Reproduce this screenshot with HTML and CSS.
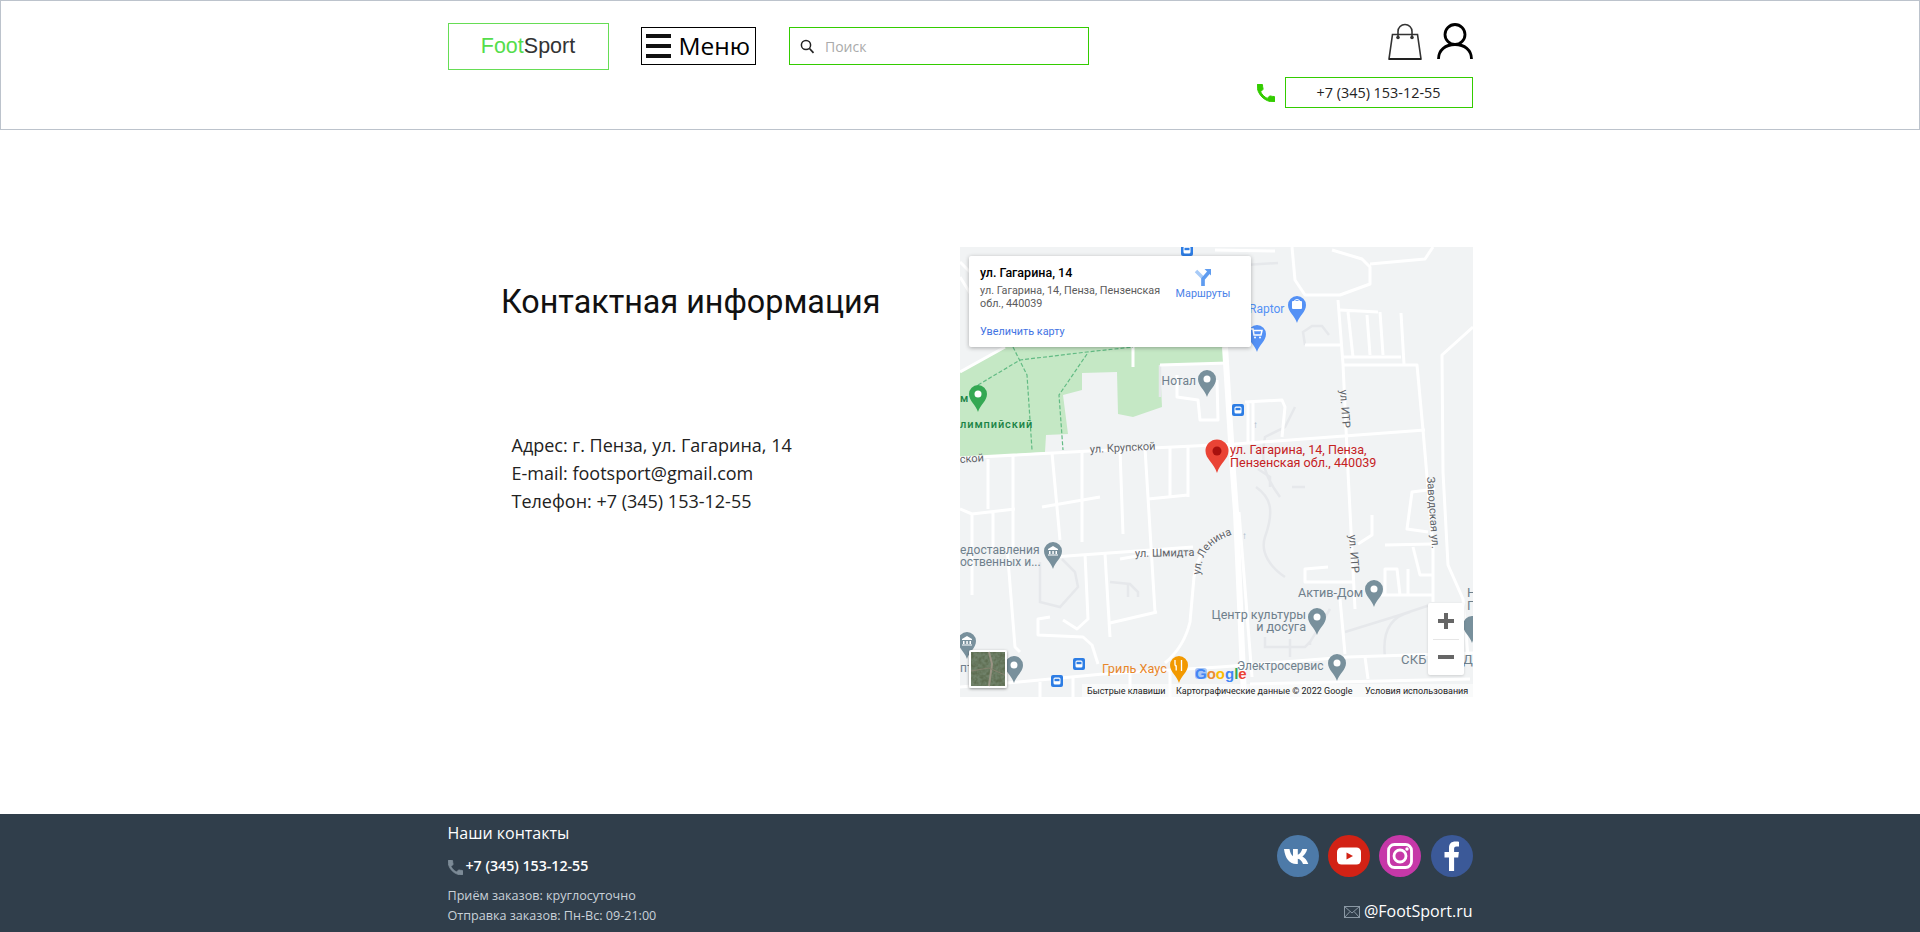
FILE: index.html
```html
<!DOCTYPE html>
<html>
<head>
  <meta charset="UTF-8">
  <title>FootSport - Контактная информация</title>
  <link rel="stylesheet" href="styles.css">
</head>
<body>
  <header id="header">
    <div class="wrap head-row">
      <div class="logo"><span class="logo-foot">Foot</span>Sport</div>
      <button class="menu-btn">
        <span class="burger"><i></i><i></i><i></i></span>
        <span>Меню</span>
      </button>
      <div class="search">
        <svg width="15" height="15" viewBox="0 0 15 15"><circle cx="6" cy="6" r="4.6" fill="none" stroke="#222" stroke-width="1.5"/><path d="M9.5 9.5l4 4.3" stroke="#222" stroke-width="1.7"/></svg>
        <span class="search-text">Поиск</span>
      </div>
      <div class="head-right">
        <div class="head-icons">
          <svg width="34" height="37" viewBox="0 0 34 37"><path d="M4.500 11.500h25l3.500 24.500H1z" fill="none" stroke="#333" stroke-width="1.600"/><path d="M1 36h32" stroke="#222" stroke-width="2"/><path d="M10 14V8.500a7 7 0 0 1 14 0V14" fill="none" stroke="#333" stroke-width="1.600"/><circle cx="10" cy="14.500" r="1.800" fill="#333"/><circle cx="24" cy="14.500" r="1.800" fill="#333"/></svg>
          <svg width="36" height="36" viewBox="0 0 36 36"><circle cx="18" cy="11.500" r="10" fill="none" stroke="#000" stroke-width="2.800"/><path d="M1.500 36c0-9 7-14.500 16.500-14.500S34.500 27 34.500 36" fill="none" stroke="#000" stroke-width="2.800"/></svg>
        </div>
        <div class="head-phone">
          <svg class="green-phone" width="18" height="18" viewBox="3 3 18 18"><path d="M6.620 10.790c1.440 2.830 3.760 5.140 6.590 6.590l2.200-2.200c.27-.27.67-.36 1.020-.24 1.120.37 2.330.57 3.570.57.55 0 1 .45 1 1V20c0 .55-.45 1-1 1-9.390 0-17-7.610-17-17 0-.55.45-1 1-1h3.500c.55 0 1 .45 1 1 0 1.250.2 2.450.57 3.570.11.35.03.74-.25 1.020l-2.200 2.200z"/></svg>
          <div class="phone-box">+7 (345) 153-12-55</div>
        </div>
      </div>
    </div>
  </header>

  <main id="main">
    <div class="wrap content-row">
      <div class="contact-info">
        <h1>Контактная информация</h1>
        <div class="contact-lines">
          <div>Адрес: г. Пенза, ул. Гагарина, 14</div>
          <div>E-mail: footsport@gmail.com</div>
          <div>Телефон: +7 (345) 153-12-55</div>
        </div>
      </div>

      <div class="map">
        <svg class="map-svg" width="513" height="450" viewBox="0 0 513 450">
          <defs>
            <path id="pin" d="M0 18C-2 11-9 7-9 0A9 9 0 1 1 9 0C9 7 2 11 0 18Z"/>
            <g id="bus">
              <rect x="-6" y="-6" width="12" height="12" rx="2" fill="#2d7de4"/>
              <rect x="-3.500" y="-3.500" width="7" height="7" rx="1.500" fill="#fff"/>
              <rect x="-2.500" y="-2.200" width="5" height="2.400" fill="#2d7de4"/>
            </g>
            <path id="lenin-curve" d="M240 328C242 306 250 295 274 287"/>
            <filter id="sat-noise" x="0" y="0" width="100%" height="100%">
              <feTurbulence type="fractalNoise" baseFrequency=".28" numOctaves="2" seed="4"/>
              <feColorMatrix values="0 0 0 0 .16  0 0 0 0 .22  0 0 0 0 .14  2.400 0 0 0 -.6"/>
            </filter>
            <filter id="thumb-shadow" x="-20%" y="-20%" width="140%" height="140%">
              <feDropShadow dx="0" dy="1" stdDeviation="1.500" flood-opacity=".4"/>
            </filter>
          </defs>
          <rect width="513" height="450" fill="#f1f3f4"/>

          <path class="park" d="M0 125L45 100H263V116L200 118L202 160L173 170L158 167L157 125L122 126V143L103 148L108 187L86 188L85 205L0 211Z"/>

          <g class="road-faint">
            <path d="M345 98L343 85L352 79L362 79L369 88"/>
            <path d="M285 18L318 16"/>
            <path d="M200 118V150"/>
            <path d="M80 315V355L100 360L118 340L115 325L102 312"/>
            <path d="M150 335L170 337L178 345L178 350M168 337V350"/>
            <path d="M320 250C305 230 300 215 305 190L325 180L335 160M310 240V230L298 222M332 240L345 240"/>
            <path d="M296 240C310 250 315 262 305 290C300 305 310 320 325 330"/>
            <path d="M350 398V395L370 362M385 385L440 368L470 358M425 410C422 385 430 370 450 365M305 390V400H345L350 395M330 392V410"/>
          </g>

          <g class="road">
            <path d="M0 211L130 204L275 197L465 183"/>
            <path d="M28 212V262M53 207V300M92 206L100 293M122 205L122 295M160 203L163 287M185 201L195 365M210 200V250M228 199V250"/>
            <path d="M0 262L12 267L55 262M12 267V348M33 265V300M47 300L55 400L60 405"/>
            <path d="M82 260L140 250M188 252L228 248"/>
            <path d="M93 310L233 300M160 312L200 305"/>
            <path d="M268 287C250 292 238 305 234 330L230 375C226 392 218 405 205 416"/>
            <path d="M125 307L128 372L117 382L103 373"/>
            <path d="M145 307L150 390"/>
            <path d="M150 376L197 365"/>
            <path d="M90 370L78 372V388L123 390L132 398L138 417"/>
            <path d="M0 440L47 436L143 427L260 420L388 410L513 406"/>
            <path d="M80 435V450M113 431V450M170 425V450M210 422V450M405 410L408 432"/>
            <path d="M290 437L510 432"/>
            <path d="M378 53L383 117L388 225L395 362"/>
            <path d="M380 352L385 407"/>
            <path d="M332 0L335 33L345 48H380L410 37V20L402 12L372 3M410 17L465 12L473 0"/>
            <path d="M380 63L418 65M388 65L393 110M407 68L410 108M420 65L423 108M441 66L444 117"/>
            <path d="M383 110H441M383 118H457L463 183L473 300V355"/>
            <path d="M475 242L452 245L447 282L468 285M425 298L472 297M453 300L460 328H473"/>
            <path d="M418 348H473M425 348V322H437L440 348M448 322V348"/>
            <path d="M513 80L482 108L483 225L488 318L503 352L508 410"/>
            <path d="M368 320L345 322V335L393 335"/>
            <path d="M412 268V288L398 297"/>
            <path d="M345 98H380"/>
            <path d="M285 155L322 153L325 160L322 190M288 155V195M293 155V195"/>
            <path d="M255 3L315 4M200 118L268 116"/>
            <path d="M217 128V150L238 153L240 173L258 173L257 133"/>
            <path d="M173 100V120M0 15L30 45M0 30L22 65M0 125L45 100"/>
          </g>
          <path class="road-main" d="M265 100L273 225L276 265L284 450"/>
          <path class="road" d="M279 265L292 430"/>

          <g class="trail">
            <path d="M18 138L60 113L127 105L173 100"/>
            <path d="M53 100L67 128L72 203"/>
            <path d="M127 107L99 148L103 203"/>
          </g>

          <!-- pins -->
          <g fill="#78909c">
            <use href="#pin" x="247" y="132"/>
            <use href="#pin" x="93" y="304"/>
            <use href="#pin" x="7" y="394"/>
            <use href="#pin" x="54" y="418"/>
            <use href="#pin" x="414" y="342"/>
            <use href="#pin" x="357" y="370"/>
            <use href="#pin" x="377" y="416"/>
            <use href="#pin" x="512" y="378"/>
          </g>
          <g fill="#fff">
            <circle cx="247" cy="132" r="3.500"/>
            <circle cx="54" cy="418" r="3.500"/>
            <circle cx="414" cy="342" r="3.500"/>
            <circle cx="357" cy="370" r="3.500"/>
            <circle cx="377" cy="416" r="3.500"/>
            <path d="M88 302l5-3 5 3v1H88zM89 304h1.500v3H89zM92.300 304h1.500v3h-1.500zM95.500 304H97v3h-1.500zM88 307.500h10v1H88z"/>
            <path d="M2 392l5-3 5 3v1H2zM3 394h1.500v3H3zM6.300 394h1.500v3H6.300zM9.500 394H11v3H9.500zM2 397.500h10v1H2z"/>
          </g>
          <use href="#pin" x="337" y="58" fill="#5491f5"/>
          <rect x="332" y="54" width="10" height="8" rx="1" fill="#fff"/>
          <path d="M334 55.500a3 3 0 0 1 6 0" fill="none" stroke="#fff"/>
          <use href="#pin" x="297" y="87" fill="#5491f5"/>
          <path d="M291 82h2l1 6h7l1-4.500h-8.500" fill="none" stroke="#fff" stroke-width="1.500"/>
          <circle cx="295" cy="90.500" r="1" fill="#fff"/><circle cx="300" cy="90.500" r="1" fill="#fff"/>
          <use href="#pin" x="18" y="147" fill="#34a853"/>
          <circle cx="18" cy="147" r="3.500" fill="#fff"/>
          <use href="#pin" x="219" y="418" fill="#f29900"/>
          <path d="M215 413v4.500a1.500 1.500 0 0 0 1.200 1.500v4.500M221.500 413v11" fill="none" stroke="#fff" stroke-width="1.300"/>
          <use href="#bus" x="227" y="3"/>
          <use href="#bus" x="278" y="163"/>
          <use href="#bus" x="119" y="417"/>
          <use href="#bus" x="97" y="434"/>
          <text class="arrow-mark" x="293" y="181">↑</text>
          <text class="arrow-mark" x="282" y="292">↑</text>

          <!-- labels -->
          <g class="poi">
            <text x="236" y="138" text-anchor="end">Нотал</text>
            <text x="0" y="307">едоставления</text>
            <text x="0" y="319">оственных и...</text>
            <text x="0" y="425">пт</text>
            <text class="poi-md" x="338" y="350">Актив-Дом</text>
            <text class="poi-md" x="346" y="372" text-anchor="end">Центр культуры</text>
            <text class="poi-md" x="346" y="384" text-anchor="end">и досуга</text>
            <text x="277" y="423">Электросервис</text>
            <text class="poi-lg" x="441" y="417">СКБ</text>
            <text class="poi-lg" x="503" y="417">Ди</text>
            <text class="poi-lg" x="507" y="350">Н</text>
            <text class="poi-lg" x="507" y="363">П</text>
          </g>
          <text class="poi-blue" x="289" y="66">Raptor</text>
          <text class="poi-green" x="0" y="181">лимпийский</text>
          <text class="poi-green" x="0" y="155">м</text>
          <text class="poi-orange" x="142" y="426">Гриль Хаус</text>
          <g class="street">
            <text transform="translate(130 206) rotate(-3)">ул. Крупской</text>
            <text transform="translate(0 216) rotate(-4)">ской</text>
            <text transform="translate(175 310) rotate(-1)">ул. Шмидта</text>
            <text transform="translate(380 143) rotate(86)">ул. ИТР</text>
            <text transform="translate(389 288) rotate(86)">ул. ИТР</text>
            <text transform="translate(467 230) rotate(86)">Заводская ул.</text>
            <text><textPath href="#lenin-curve">ул. Ленина</textPath></text>
          </g>

          <path fill="#ea4335" d="M257 226C254 216 245.500 212 245.500 204A11.500 11.500 0 1 1 268.500 204C268.500 212 260 216 257 226Z"/>
          <circle cx="257" cy="204" r="4.500" fill="#a8100e"/>
          <text class="poi-red" x="270" y="207">ул. Гагарина, 14, Пенза,</text>
          <text class="poi-red" x="270" y="220">Пензенская обл., 440039</text>

          <!-- google logo + bottom strip -->
          <rect x="235" y="421" width="12" height="11" rx="3" fill="#a9c6f5"/>
          <text class="google" x="235" y="432"><tspan fill="#4285f4">G</tspan><tspan fill="#ea8b35">o</tspan><tspan fill="#fbbc05">o</tspan><tspan fill="#4285f4">g</tspan><tspan fill="#34a853">l</tspan><tspan fill="#ea4335">e</tspan></text>
          <rect x="122" y="437" width="391" height="13" fill="#fff" fill-opacity=".55"/>
          <g class="map-foot">
            <text x="127" y="447">Быстрые клавиши</text>
            <text x="216" y="447">Картографические данные © 2022 Google</text>
            <text x="405" y="447">Условия использования</text>
          </g>

          <!-- satellite thumb -->
          <rect x="9" y="403" width="38" height="38" rx="2" fill="#fff" filter="url(#thumb-shadow)"/>
          <rect x="11" y="405" width="34" height="34" fill="#5d6c50"/>
          <rect x="11" y="405" width="34" height="34" filter="url(#sat-noise)"/>
          <path d="M29 405l3 12-3 22" stroke="#9a9384" stroke-width="2" fill="none"/>
          <path d="M11 424l18-3 16 7" stroke="#85826f" stroke-width="1" fill="none"/>
        </svg>

        <div class="map-card">
          <div class="card-text">
            <div class="card-title">ул. Гагарина, 14</div>
            <div class="card-addr">ул. Гагарина, 14, Пенза, Пензенская<br>обл., 440039</div>
            <div class="card-link">Увеличить карту</div>
          </div>
          <div class="card-route">
            <svg width="18" height="18" viewBox="0 0 18 18"><path d="M2 3l7 7v8" fill="none" stroke="#a8cbf7" stroke-width="3.500"/><path d="M9 18v-7l6-7" fill="none" stroke="#5f9cf0" stroke-width="3.500"/><path d="M10.500 1H17v6.500z" fill="#5f9cf0"/></svg>
            <span>Маршруты</span>
          </div>
        </div>

        <div class="zoom-ctrl">
          <div class="zoom-btn"><span class="plus"></span></div>
          <div class="zoom-btn zoom-minus"><span class="minus"></span></div>
        </div>
      </div>
    </div>
  </main>

  <footer id="footer">
    <div class="wrap foot-row">
      <div class="foot-left">
        <div class="foot-title">Наши контакты</div>
        <div class="foot-phone">
          <svg width="15" height="15" viewBox="3 3 18 18"><path fill="#7d8b97" stroke="#7d8b97" d="M6.620 10.790c1.440 2.830 3.760 5.140 6.590 6.590l2.200-2.200c.27-.27.67-.36 1.020-.24 1.120.37 2.330.57 3.570.57.55 0 1 .45 1 1V20c0 .55-.45 1-1 1-9.390 0-17-7.610-17-17 0-.55.45-1 1-1h3.500c.55 0 1 .45 1 1 0 1.250.2 2.450.57 3.570.11.35.03.74-.25 1.020l-2.200 2.200z"/></svg>
          <span>+7 (345) 153-12-55</span>
        </div>
        <div class="foot-hours">Приём заказов: круглосуточно</div>
        <div class="foot-hours">Отправка заказов: Пн-Вс: 09-21:00</div>
      </div>
      <div class="foot-right">
        <div class="socials">
          <svg width="42" height="42" viewBox="0 0 42 42"><circle cx="21" cy="21" r="21" fill="#4d7aa8"/><path fill="#fff" d="M7 14h5.500c.6 3.600 1.800 6 3.500 7.200V14h4.800v5.800c1.900-.8 3.500-3 4.500-5.800h4.900c-.8 3.400-2.800 6-4.800 7.400 2.400 1.200 4.700 3.600 5.900 7.600h-5.300c-1-2.900-2.900-4.700-5.200-5.200V29h-1.600C12.700 29 8 23.500 7 14z"/></svg>
          <svg width="42" height="42" viewBox="0 0 42 42"><circle cx="21" cy="21" r="21" fill="#d22215"/><rect x="9" y="12.500" width="24" height="17" rx="4.500" fill="#fff"/><path d="M18.500 17.500l6.500 3.500-6.500 3.500z" fill="#d22215"/></svg>
          <svg width="42" height="42" viewBox="0 0 42 42"><circle cx="21" cy="21" r="21" fill="#c638a8"/><rect x="9.500" y="9.500" width="23" height="23" rx="6" fill="none" stroke="#fff" stroke-width="2.800"/><circle cx="21" cy="21" r="6" fill="none" stroke="#fff" stroke-width="2.800"/><circle cx="28" cy="14" r="1.700" fill="#fff"/></svg>
          <svg width="42" height="42" viewBox="0 0 42 42"><circle cx="21" cy="21" r="21" fill="#3b5998"/><path fill="#fff" d="M18 36V22.500h-4.500V17H18v-4c0-4.500 2.600-6.500 6.400-6.500 1.800 0 3.100.1 3.600.2v4.800h-2.500c-2 0-2.400 1-2.400 2.400V17h4.800l-.7 5.500h-4.100V36z"/></svg>
        </div>
        <div class="foot-mail">
          <svg width="16" height="12" viewBox="0 0 16 12"><rect x=".5" y=".5" width="15" height="11" fill="none" stroke="#8a98a4"/><path d="M.5.500L8 7l7.500-6.500M.5 11.500L6 5.500M15.500 11.500L10 5.500" fill="none" stroke="#8a98a4"/></svg>
          <span>@FootSport.ru</span>
        </div>
      </div>
    </div>
  </footer>
</body>
</html>
```

FILE: styles.css
```css
html, body {
  margin: 0;
  padding: 0;
  height: 100%;
  overflow: hidden;
}

body {
  display: flex;
  flex-direction: column;
  height: 100vh;
  background: #fff;
  font-family: "Open Sans", sans-serif;
  color: #222;
}

.wrap {
  width: 1025px;
  margin: 0 auto;
}

/* header */
#header {
  height: 130px;
  box-sizing: border-box;
  border: 1px solid #bcc3cc;
  flex-shrink: 0;
}

.head-row {
  display: flex;
  align-items: flex-start;
  padding-top: 22px;
}

.logo {
  width: 161px;
  height: 47px;
  box-sizing: border-box;
  border: 1px solid #66dd55;
  font-family: "Liberation Sans", sans-serif;
  font-size: 21.500px;
  line-height: 45px;
  text-align: center;
  color: #333;
}

.logo-foot {
  color: #55dd4c;
}

.menu-btn {
  display: flex;
  align-items: center;
  width: 115px;
  height: 38px;
  box-sizing: border-box;
  margin: 4px 0 0 32px;
  padding: 0 0 0 4px;
  border: 1px solid #000;
  background: #fff;
  font-family: "Open Sans", sans-serif;
  font-size: 24.500px;
  line-height: 34px;
  color: #000;
}

.burger {
  display: flex;
  flex-direction: column;
  gap: 6.500px;
  width: 25px;
  margin-right: 8px;
}

.burger i {
  display: block;
  height: 3.500px;
  background: #111;
}

.search {
  display: flex;
  align-items: center;
  width: 300px;
  height: 38px;
  box-sizing: border-box;
  margin: 4px 0 0 33.500px;
  padding-left: 10px;
  border: 1px solid #33cc00;
}

.search-text {
  margin-left: 10px;
  font-size: 14px;
  color: #aaa;
}

.head-right {
  display: flex;
  flex-direction: column;
  align-items: flex-end;
  margin-left: auto;
}

.head-icons {
  display: flex;
  align-items: flex-start;
  gap: 15px;
  height: 54px;
}

.head-phone {
  display: flex;
  align-items: center;
  gap: 10px;
}

.green-phone path {
  fill: #33cc00;
  stroke: #33cc00;
  stroke-width: 1;
}

.phone-box {
  width: 188px;
  height: 31px;
  box-sizing: border-box;
  border: 1px solid #33cc00;
  font-size: 14.400px;
  line-height: 29px;
  text-align: center;
  color: #222;
}

/* contacts */
#main {
  flex: 1;
}

.content-row {
  display: flex;
  padding-top: 117px;
}

.contact-info {
  flex: 1;
}

.contact-info h1 {
  margin: 36px 0 0 53.500px;
  font-family: Roboto, sans-serif;
  font-size: 32.300px;
  line-height: 38px;
  font-weight: 400;
  color: #111;
}

.contact-lines {
  margin: 110px 0 0 64px;
  font-size: 18px;
  line-height: 28px;
  color: #222;
}

/* map */
.map {
  position: relative;
  width: 513px;
  height: 450px;
  overflow: hidden;
  font-family: Roboto, sans-serif;
}

.map-svg {
  display: block;
}

.park {
  fill: #c5e8c5;
}

.road, .road-faint, .road-main, .trail {
  fill: none;
}

.road {
  stroke: #fff;
  stroke-width: 3;
  stroke-linejoin: round;
}

.road-main {
  stroke: #fff;
  stroke-width: 6;
}

.road-faint {
  stroke: #e6e8eb;
  stroke-width: 2.500;
}

.trail {
  stroke: #62bb84;
  stroke-width: 1.200;
  stroke-dasharray: 4 2;
}

.poi text {
  font-size: 12px;
  fill: #6f808c;
}

.poi .poi-md {
  font-size: 12.600px;
}

.poi .poi-lg {
  font-size: 13px;
  letter-spacing: .2px;
}

.poi-blue {
  font-size: 12px;
  fill: #5491f5;
}

.poi-green {
  font-size: 11px;
  font-weight: 500;
  letter-spacing: .9px;
  fill: #1a8345;
}

.poi-orange {
  font-size: 12.700px;
  fill: #e8862a;
}

.poi-red {
  font-size: 12.600px;
  fill: #c5221f;
}

.street text {
  font-size: 11px;
  fill: #5f6368;
}

.arrow-mark {
  font-size: 10px;
  fill: #9fb4c7;
}

.google {
  font-family: "Liberation Sans", sans-serif;
  font-size: 15px;
  font-weight: 700;
}

.map-foot text {
  font-size: 9px;
  fill: #222;
}

.map-card {
  position: absolute;
  left: 9px;
  top: 9px;
  display: flex;
  width: 282px;
  height: 91px;
  box-sizing: border-box;
  padding: 9px 0 0 11.500px;
  border-radius: 2px;
  background: #fff;
  box-shadow: 0 1px 4px rgba(0, 0, 0, .3);
}

.card-text {
  width: 190px;
}

.card-title {
  font-size: 12.500px;
  line-height: 16px;
  font-weight: 500;
  color: #000;
}

.card-addr {
  margin-top: 3px;
  font-size: 10.800px;
  line-height: 13px;
  white-space: nowrap;
  color: #5b5b5b;
}

.card-link {
  margin-top: 15px;
  font-size: 10.800px;
  line-height: 13px;
  color: #4273e3;
}

.card-route {
  display: flex;
  flex-direction: column;
  align-items: center;
  width: 70px;
  margin-left: -2px;
  padding-top: 3px;
  font-size: 10.800px;
  line-height: 16px;
  color: #4a82e8;
}

.zoom-ctrl {
  position: absolute;
  left: 468px;
  top: 356px;
  width: 36px;
  height: 72px;
  border-radius: 2px;
  background: #fff;
  box-shadow: 0 1px 3px rgba(0, 0, 0, .15);
}

.zoom-btn {
  position: relative;
  height: 36px;
}

.zoom-minus::before {
  content: "";
  position: absolute;
  top: 0;
  left: 5px;
  right: 5px;
  height: 1px;
  background: #e6e6e6;
}

.plus, .minus {
  position: absolute;
  left: 10px;
  top: 16px;
  width: 16px;
  height: 4px;
  background: #666;
}

.plus::after {
  content: "";
  position: absolute;
  left: 6px;
  top: -6px;
  width: 4px;
  height: 16px;
  background: #666;
}

/* footer */
#footer {
  height: 118px;
  flex-shrink: 0;
  background: #303e4b;
  color: #fff;
}

.foot-row {
  display: flex;
  justify-content: space-between;
}

.foot-left {
  padding-top: 8px;
}

.foot-title {
  font-size: 16px;
  line-height: 22px;
}

.foot-phone {
  display: flex;
  align-items: center;
  gap: 3px;
  margin-top: 12px;
  font-size: 14.200px;
  line-height: 20px;
  font-weight: 600;
}

.foot-phone svg {
  margin-top: 3px;
}

.foot-hours {
  font-size: 12.600px;
  line-height: 20px;
  color: #c9d1d9;
}

.foot-phone + .foot-hours {
  margin-top: 10px;
}

.foot-right {
  display: flex;
  flex-direction: column;
  align-items: flex-end;
  padding-top: 21px;
}

.socials {
  display: flex;
  gap: 9.300px;
}

.foot-mail {
  display: flex;
  align-items: center;
  gap: 4px;
  margin-top: 23px;
  font-size: 16px;
  line-height: 22px;
}

.foot-mail svg {
  margin-top: 2px;
}
```
